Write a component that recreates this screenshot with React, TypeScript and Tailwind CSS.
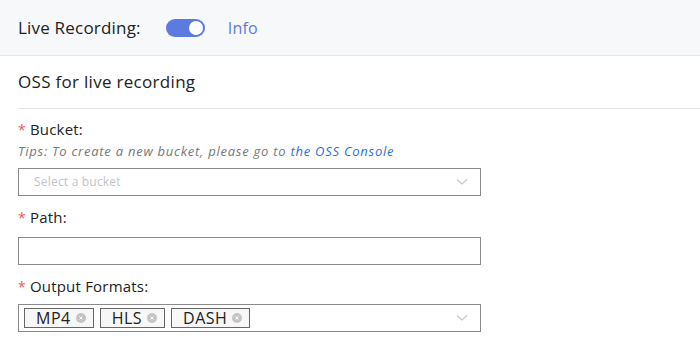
import React from "react";

const Chevron = () => (
  <svg width="12" height="8" viewBox="0 0 12 8" fill="none" className="shrink-0">
    <path d="M1 1.5 L6 6 L11 1.5" stroke="#c0c4cc" strokeWidth="1.1" />
  </svg>
);

const Tag = ({ label }: { label: string }) => (
  <div className="flex items-center h-[20px] border border-[#666] bg-[#f7f7f7] pl-[11px] pr-[7px] gap-[5px] text-[16px] text-[#222] leading-none tracking-[0.5px]">
    <span>{label}</span>
    <span className="w-[10px] h-[10px] rounded-full bg-[#c4c4c4] flex items-center justify-center">
      <svg width="6" height="6" viewBox="0 0 6 6">
        <path d="M1.5 1.5 L4.5 4.5 M4.5 1.5 L1.5 4.5" stroke="#fff" strokeWidth="1" />
      </svg>
    </span>
  </div>
);

const Label = ({ text }: { text: string }) => (
  <div className="flex items-center text-[15px] text-[#222] leading-none">
    <span className="text-[#f05a5a] mr-[4px] text-[14px]">*</span>
    <span>{text}</span>
  </div>
);

export default function App() {
  return (
    <div className="w-[700px] h-[348px] bg-white overflow-hidden tracking-[0.2px]" style={{ fontFamily: "'Open Sans', sans-serif" }}>
      <div className="h-[56px] bg-[#f7f8fa] border-b border-[#e4e6ea] flex items-center pl-[18px]">
        <span className="text-[17px] text-[#222]">Live Recording:</span>
        <div className="ml-[25px] w-[39px] h-[18px] rounded-full bg-[#5b7be0] flex items-center justify-end pr-[2px]">
          <div className="w-[14px] h-[14px] rounded-full bg-white" />
        </div>
        <span className="ml-[23px] text-[16px] text-[#5b7be0]">Info</span>
      </div>
      <div className="pl-[18px]">
        <div className="h-[53px] flex items-center border-b border-[#e0e2e6]">
          <span className="text-[17px] text-[#222] tracking-[0.3px]">OSS for live recording</span>
        </div>
        <div className="pt-[13px]">
          <Label text="Bucket:" />
          <div className="mt-[8px] text-[13px] italic text-[#777] leading-none tracking-[0.75px]">
            Tips: To create a new bucket, please go to <span className="text-[#2a6fdb]">the OSS Console</span>
          </div>
          <div className="mt-[10px] w-[463px] h-[28px] border border-[#8a8a8a] flex items-center pl-[15px] pr-[12px] justify-between">
            <span className="text-[12px] text-[#c0c4cc]">Select a bucket</span>
            <Chevron />
          </div>
        </div>
        <div className="pt-[14px]">
          <Label text="Path:" />
          <div className="mt-[12px] w-[463px] h-[28px] border border-[#8a8a8a]" />
        </div>
        <div className="pt-[14px]">
          <Label text="Output Formats:" />
          <div className="mt-[10px] w-[463px] h-[28px] border border-[#8a8a8a] flex items-center pl-[5px] pr-[12px]">
            <div className="flex items-center gap-[6px] flex-1">
              <Tag label="MP4" />
              <Tag label="HLS" />
              <Tag label="DASH" />
            </div>
            <Chevron />
          </div>
        </div>
      </div>
    </div>
  );
}
